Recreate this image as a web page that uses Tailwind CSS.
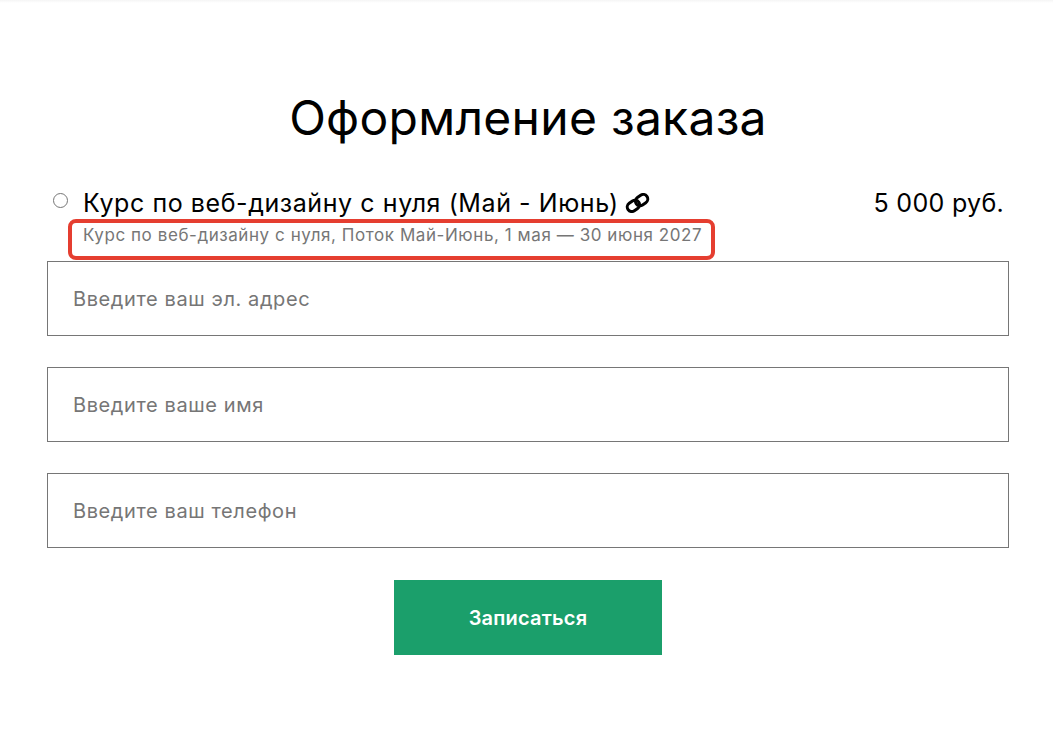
<!DOCTYPE html>
<html lang="ru"><head><meta charset="utf-8">
<script src="https://cdn.jsdelivr.net/npm/@tailwindcss/browser@4"></script>
</head>
<body class="bg-white text-black font-['Inter',sans-serif] h-[729px] overflow-hidden">
<div class="h-[3px] bg-gradient-to-b from-[#f5f5f5] to-white"></div>
<main class="px-[47px] w-[1056px]">
  <h1 class="mt-[87px] h-[56px] text-center text-[48px] leading-[56px] font-normal tracking-[0.27px]">Оформление заказа</h1>
  <div class="relative mt-[41px] h-[74px]">
    <div class="flex items-start pl-[6px] pr-[5px]">
      <span class="mt-[6px] w-[15px] h-[15px] rounded-full border border-[#767676] shrink-0"></span>
      <div class="ml-[15px] flex-1 flex justify-between text-[25px] leading-[32px]">
        <span class="flex items-center gap-[6px] tracking-[0.58px]">Курс по веб-дизайну с нуля (Май - Июнь)
          <svg width="25" height="20" viewBox="0 0 25 20" fill="none" stroke="#000" stroke-width="3"><g transform="rotate(-35 12.5 10)"><rect x="1" y="5.5" width="13" height="9" rx="4.5"/><rect x="11" y="5.5" width="13" height="9" rx="4.5"/></g></svg>
        </span>
        <span class="tracking-[0.3px]">5 000 руб.</span>
      </div>
    </div>
    <p class="ml-[36px] mt-[6px] text-[#767676] text-[17px] leading-[20px] tracking-[0.57px]">Курс по веб-дизайну с нуля, Поток Май-Июнь, 1 мая — 30 июня 2027</p>
    <div class="absolute left-[21px] top-[32px] w-[647px] h-[41px] border-[4px] border-[#e53e30] rounded-[8px]"></div>
  </div>
  <form class="flex flex-col gap-[31px] w-[962px]">
    <div class="h-[75px] border border-[#767676] flex items-center pl-[25px] text-[20px] tracking-[0.6px] text-[#767676]">Введите ваш эл. адрес</div>
    <div class="h-[75px] border border-[#767676] flex items-center pl-[25px] text-[20px] tracking-[0.6px] text-[#767676]">Введите ваше имя</div>
    <div class="h-[75px] border border-[#767676] flex items-center pl-[25px] text-[20px] tracking-[0.6px] text-[#767676]">Введите ваш телефон</div>
    <div class="flex justify-center mt-[1px]">
      <button type="button" class="w-[268px] h-[75px] bg-[#1b9f6b] text-white text-[20px] tracking-[0.2px] font-semibold">Записаться</button>
    </div>
  </form>
</main>
</body></html>
